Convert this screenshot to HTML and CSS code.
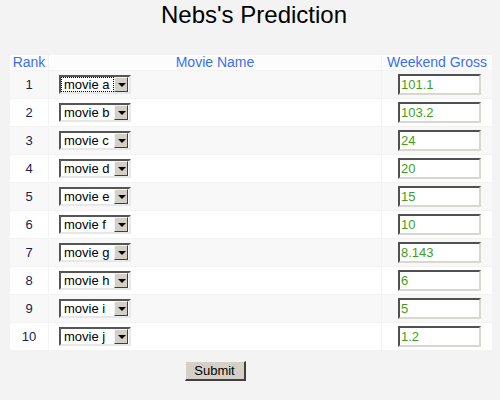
FILE: index.html
```html
<!DOCTYPE html>
<html>
<head>
<meta charset="utf-8">
<link rel="stylesheet" href="styles.css">
</head>
<body>
<h1 class="title">Nebs's Prediction</h1>
<table class="grid">
  <thead>
    <tr><th class="c-rank">Rank</th><th class="c-movie">Movie Name</th><th class="c-gross">Weekend Gross</th></tr>
  </thead>
  <tbody>
    <tr><td class="rank">1</td><td class="movie"><span class="sel focus"><span class="sel-text">movie a</span><span class="sel-btn"></span></span></td><td class="gross"><span class="inp">101.1</span></td></tr>
    <tr><td class="rank">2</td><td class="movie"><span class="sel"><span class="sel-text">movie b</span><span class="sel-btn"></span></span></td><td class="gross"><span class="inp">103.2</span></td></tr>
    <tr><td class="rank">3</td><td class="movie"><span class="sel"><span class="sel-text">movie c</span><span class="sel-btn"></span></span></td><td class="gross"><span class="inp">24</span></td></tr>
    <tr><td class="rank">4</td><td class="movie"><span class="sel"><span class="sel-text">movie d</span><span class="sel-btn"></span></span></td><td class="gross"><span class="inp">20</span></td></tr>
    <tr><td class="rank">5</td><td class="movie"><span class="sel"><span class="sel-text">movie e</span><span class="sel-btn"></span></span></td><td class="gross"><span class="inp">15</span></td></tr>
    <tr><td class="rank">6</td><td class="movie"><span class="sel"><span class="sel-text">movie f</span><span class="sel-btn"></span></span></td><td class="gross"><span class="inp">10</span></td></tr>
    <tr><td class="rank">7</td><td class="movie"><span class="sel"><span class="sel-text">movie g</span><span class="sel-btn"></span></span></td><td class="gross"><span class="inp">8.143</span></td></tr>
    <tr><td class="rank">8</td><td class="movie"><span class="sel"><span class="sel-text">movie h</span><span class="sel-btn"></span></span></td><td class="gross"><span class="inp">6</span></td></tr>
    <tr><td class="rank">9</td><td class="movie"><span class="sel"><span class="sel-text">movie i</span><span class="sel-btn"></span></span></td><td class="gross"><span class="inp">5</span></td></tr>
    <tr><td class="rank">10</td><td class="movie"><span class="sel"><span class="sel-text">movie j</span><span class="sel-btn"></span></span></td><td class="gross"><span class="inp">1.2</span></td></tr>
  </tbody>
  <tfoot>
    <tr><td></td><td class="submit-cell"><button class="submit">Submit</button></td><td></td></tr>
  </tfoot>
</table>
</body>
</html>
```
FILE: styles.css
```css
html, body {
  margin: 0;
  padding: 0;
}
body {
  background: #f3f3f3;
  font-family: Arial, "Liberation Sans", sans-serif;
  width: 500px;
  height: 400px;
  overflow: hidden;
}
.title {
  margin: 0;
  padding-top: 1px;
  padding-left: 8px;
  height: 53px;
  text-align: center;
  font-weight: normal;
  font-size: 24px;
  line-height: 28px;
  color: #000;
}
.grid {
  margin-left: 9px;
  width: 484px;
  border-collapse: separate;
  border-spacing: 1px;
  font-size: 13px;
}
.grid th {
  background: #fcfcfc;
  color: #3a6ff6;
  font-weight: normal;
  font-size: 14px;
  height: 15px;
  line-height: 15px;
  padding: 0;
}
.c-rank { width: 38px; }
.c-gross { width: 110px; }
.grid tbody td {
  height: 27px;
  padding: 0;
}
.grid tbody tr:nth-child(odd) td { background: #f8f8f8; }
.grid tbody tr:nth-child(even) td { background: #ffffff; }
.rank {
  text-align: center;
  color: #1c1c4a;
}
.movie {
  padding-left: 10px !important;
}
.gross {
  text-align: center;
  padding-left: 5px !important;
}
.sel {
  display: inline-flex;
  align-items: stretch;
  box-sizing: border-box;
  width: 72px;
  height: 19px;
  border-style: solid;
  border-width: 2px;
  border-color: #555 #e8e8e8 #e8e8e8 #555;
  background: #fff;
  vertical-align: middle;
}
.sel-text {
  flex: 1;
  padding-left: 3px;
  line-height: 15px;
  color: #000;
  white-space: nowrap;
}
.focus .sel-text {
  outline: 1px dotted #000;
  outline-offset: -1px;
}
.sel-btn {
  width: 12px;
  margin: 0 1px 0 0;
  border-style: solid;
  border-width: 1px;
  border-color: #f4f4f4 #404040 #404040 #f4f4f4;
  background: #d4d0c8;
  position: relative;
}
.sel-btn::after {
  content: "";
  position: absolute;
  left: 3px;
  top: 5px;
  border-left: 4px solid transparent;
  border-right: 4px solid transparent;
  border-top: 4px solid #000;
}
.inp {
  display: inline-block;
  box-sizing: border-box;
  width: 83px;
  height: 21px;
  border-style: solid;
  border-width: 2px;
  border-color: #505050 #d8d8d0 #d8d8d0 #505050;
  background: #fff;
  color: #3f9f1a;
  text-align: left;
  padding-left: 1px;
  line-height: 17px;
  vertical-align: middle;
}
.grid tfoot td {
  background: transparent;
  padding: 0;
}
.submit-cell {
  text-align: center;
  padding-top: 10px !important;
}
.submit {
  font-family: Arial, "Liberation Sans", sans-serif;
  font-size: 13px;
  color: #000;
  width: 61px;
  height: 20px;
  padding: 0;
  background: #d4d0c8;
  border-style: solid;
  border-width: 1px 2px 2px 1px;
  border-color: #f4f4f4 #404040 #404040 #f4f4f4;
}
```
